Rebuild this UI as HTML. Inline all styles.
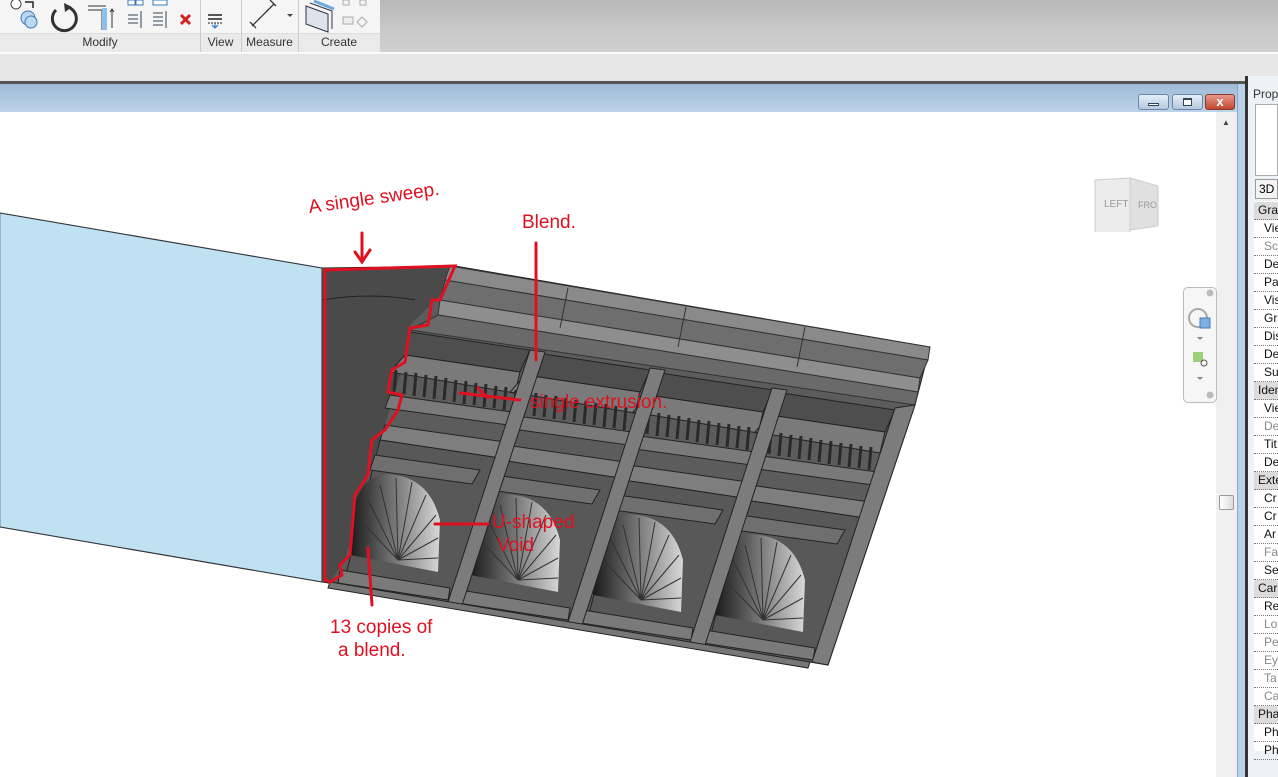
<!DOCTYPE html>
<html><head><meta charset="utf-8"><style>
*{margin:0;padding:0;box-sizing:border-box}
body{width:1278px;height:777px;overflow:hidden;background:#fff;font-family:"Liberation Sans",sans-serif;position:relative}
.abs{position:absolute}
.lbl{position:absolute;top:35px;font-size:12px;color:#333;text-align:center}
.prow{position:absolute;left:1254px;width:24px;height:18px;font-size:12px;line-height:17px;padding-left:10px;border-bottom:1px dotted #777;color:#111;white-space:nowrap;overflow:hidden}
.ph{background:#dcdcdc;padding-left:4px}
.g{color:#888}
.red{position:absolute;color:#e01020;font-size:19px;font-family:"Liberation Sans",sans-serif;white-space:nowrap}
</style></head><body>
<div class="abs" style="left:0;top:0;width:1278px;height:52px;background:linear-gradient(#b8b8b8,#c9c9c9 60%,#d0d0d0)"></div>
<div class="abs" style="left:0;top:0;width:380px;height:52px;background:#f5f5f5;border-bottom:1px solid #ccc"></div>
<div class="abs" style="left:0;top:33px;width:380px;height:19px;background:#eaeaea;border-top:1px solid #ddd"></div>
<div class="abs" style="left:200px;top:0;width:1px;height:52px;background:#ccc"></div>
<div class="abs" style="left:241px;top:0;width:1px;height:52px;background:#ccc"></div>
<div class="abs" style="left:298px;top:0;width:1px;height:52px;background:#ccc"></div>
<div class="lbl" style="left:0;width:200px">Modify</div>
<div class="lbl" style="left:200px;width:41px">View</div>
<div class="lbl" style="left:241px;width:57px">Measure</div>
<div class="lbl" style="left:298px;width:82px">Create</div>
<svg class="abs" style="left:0;top:0" width="380" height="33">
 <circle cx="16" cy="4" r="5" fill="#fff" stroke="#444"/><circle cx="28" cy="18" r="7" fill="#bcd8f0" stroke="#3a7ab8"/><circle cx="31" cy="22" r="6" fill="#bcd8f0" stroke="#3a7ab8"/>
 <path d="M25 2 h8 v6" fill="none" stroke="#222" stroke-width="1.5"/>
 <path d="M70 8 A12 12 0 1 1 56 10" fill="none" stroke="#333" stroke-width="3"/><path d="M64 3 l8 4 -7 5z" fill="#333"/>
 <path d="M88 6 h18 M88 10 h14 v20" stroke="#333" fill="none"/><rect x="102" y="8" width="5" height="22" fill="#8cc0ea"/><path d="M112 28 v-18 M110 12 l2 -3 2 3" stroke="#333" fill="none"/>
 <rect x="128" y="0" width="7" height="5" fill="#fff" stroke="#3a7ab8"/><rect x="136" y="0" width="7" height="5" fill="#fff" stroke="#3a7ab8"/><rect x="153" y="0" width="14" height="5" fill="#fff" stroke="#3a7ab8"/>
 <path d="M128 15 h10 M128 19 h10 M128 23 h10 M141 11 v17" stroke="#345" fill="none"/>
 <path d="M153 13 h10 M153 17 h10 M153 21 h10 M153 25 h10 M166 11 v17" stroke="#345" fill="none"/>
 <path d="M181 15 l9 9 M190 15 l-9 9" stroke="#d62020" stroke-width="3"/>
 <path d="M208 15 h14 M208 19 h14" stroke="#222" stroke-width="1.5"/><path d="M208 23 h14" stroke="#222" stroke-dasharray="2 1"/><path d="M215 23 v5 M212 25 l3 3 3-3" stroke="#1a6ad0" fill="none"/>
 <path d="M252 26 l22 -22 M250 22 l6 6 M270 0 l6 6" stroke="#333" stroke-width="1.3"/><path d="M287 14 l3 3 3 -3z" fill="#444"/>
 <path d="M306 6 l22 8 v18 l-22 -8z" fill="#dde3ea" stroke="#334"/><path d="M310 3 l22 8 v18" fill="none" stroke="#334"/><path d="M314 1 l20 8" stroke="#6aa8e0" stroke-width="3"/>
 <rect x="343" y="0" width="6" height="5" fill="none" stroke="#aaa"/><rect x="360" y="0" width="6" height="5" fill="none" stroke="#aaa"/><rect x="343" y="17" width="10" height="7" fill="#eee" stroke="#aaa"/><path d="M362 17 l5 5 -5 5 -5-5z" fill="none" stroke="#aaa"/>
</svg>
<div class="abs" style="left:0;top:52px;width:1278px;height:30px;background:#e6e6e6;border-top:2px solid #fafafa"></div>
<div class="abs" style="left:0;top:81px;width:1245px;height:3px;background:#555"></div>
<div class="abs" style="left:0;top:84px;width:1240px;height:28px;background:linear-gradient(#9fbbd8,#bcd3ea)"></div>
<div class="abs" style="left:1138px;top:94px;width:31px;height:16px;border:1px solid #6c86a6;border-radius:3px;background:linear-gradient(#e4eef8,#b4c8de)"><div style="margin:8px auto 0;width:11px;height:3px;border:1px solid #345;background:#fff"></div></div>
<div class="abs" style="left:1172px;top:94px;width:31px;height:16px;border:1px solid #6c86a6;border-radius:3px;background:linear-gradient(#e4eef8,#b4c8de)"><div style="margin:3px auto 0;width:9px;height:8px;border:1px solid #345;background:#fff;border-top-width:2px"></div></div>
<div class="abs" style="left:1205px;top:94px;width:30px;height:16px;border:1px solid #8a3a2a;border-radius:3px;background:linear-gradient(#e89a8a,#c04830);color:#fff;font-weight:bold;font-size:13px;text-align:center;line-height:14px">x</div>
<div class="abs" style="left:1216px;top:112px;width:21px;height:665px;background:#f0f0f0"></div>
<div class="abs" style="left:1219px;top:495px;width:15px;height:15px;border:1px solid #999;border-radius:2px;background:linear-gradient(90deg,#fff,#ddd)"></div>
<div class="abs" style="left:1222px;top:118px;font-size:8px;color:#444">▲</div>
<div class="abs" style="left:1237px;top:84px;width:8px;height:693px;background:#b9d2ea;border-left:1px solid #8aa8c8"></div>
<div class="abs" style="left:1245px;top:76px;width:3px;height:701px;background:#333"></div>
<div class="abs" style="left:1248px;top:76px;width:30px;height:701px;background:#eef2f6"></div>
<div class="abs" style="left:1253px;top:87px;font-size:12px;color:#333">Prop</div>
<div class="abs" style="left:1255px;top:104px;width:23px;height:72px;background:#fff;border:1px solid #aaa"></div>
<div class="abs" style="left:1255px;top:179px;width:23px;height:20px;background:#f4f4f4;border:1px solid #999;font-size:12px;line-height:18px;padding-left:3px">3D</div>
<div class="abs" style="left:1254px;top:201px;width:24px;height:550px;background:#fff"></div>
<div class="prow ph" style="top:202px">Gra</div>
<div class="prow" style="top:220px">Vie</div><div class="prow g" style="top:238px">Sc</div><div class="prow" style="top:256px">De</div><div class="prow" style="top:274px">Pa</div><div class="prow" style="top:292px">Vis</div><div class="prow" style="top:310px">Gr</div><div class="prow" style="top:328px">Dis</div><div class="prow" style="top:346px">De</div><div class="prow" style="top:364px">Su</div>
<div class="prow ph" style="top:382px">Iden</div>
<div class="prow" style="top:400px">Vie</div><div class="prow g" style="top:418px">De</div><div class="prow" style="top:436px">Tit</div><div class="prow" style="top:454px">De</div>
<div class="prow ph" style="top:472px">Exte</div>
<div class="prow" style="top:490px">Cr</div><div class="prow" style="top:508px">Cr</div><div class="prow" style="top:526px">Ar</div><div class="prow g" style="top:544px">Fa</div><div class="prow" style="top:562px">Se</div>
<div class="prow ph" style="top:580px">Car</div>
<div class="prow" style="top:598px">Re</div><div class="prow g" style="top:616px">Lo</div><div class="prow g" style="top:634px">Pe</div><div class="prow g" style="top:652px">Ey</div><div class="prow g" style="top:670px">Ta</div><div class="prow g" style="top:688px">Ca</div>
<div class="prow ph" style="top:706px">Pha</div>
<div class="prow" style="top:724px">Ph</div><div class="prow" style="top:742px">Ph</div>
<svg class="abs" style="left:1090px;top:172px" width="75" height="60"><path d="M5 8 l35 -2 v58 l-35 -2z" fill="#ececec" stroke="#ccc"/><path d="M40 6 l28 8 v40 l-28 4z" fill="#e0e0e0" stroke="#ccc"/><text x="14" y="35" font-size="10" fill="#999" font-family="Liberation Sans">LEFT</text><text x="48" y="36" font-size="9" fill="#999" font-family="Liberation Sans">FRO</text></svg>
<div class="abs" style="left:1183px;top:287px;width:34px;height:116px;border:1px solid #bbb;border-radius:5px;background:#f6f6f6"></div>
<svg class="abs" style="left:1183px;top:287px" width="34" height="116"><circle cx="27" cy="6" r="3.5" fill="#bbb"/><circle cx="15" cy="31" r="9" fill="none" stroke="#aaa" stroke-width="2"/><rect x="17" y="31" width="10" height="10" fill="#7eb0e4" stroke="#4a7ab0"/><path d="M14 50 l3 3 3-3z" fill="#888"/><rect x="10" y="65" width="10" height="10" fill="#9ed07a"/><circle cx="21" cy="76" r="3" fill="none" stroke="#555"/><path d="M14 90 l3 3 3-3z" fill="#888"/><circle cx="27" cy="108" r="3.5" fill="#bbb"/></svg>
<svg class="abs" style="left:0;top:112px" width="1216" height="665">
<defs>
 <clipPath id="mass"><polygon points="322,268 455,266 930,347 915,405 828,665 810,662 322,582"/></clipPath>
 <linearGradient id="fan" x1="0" x2="1"><stop offset="0" stop-color="#1a1a1a"/><stop offset=".5" stop-color="#777"/><stop offset="1" stop-color="#d8d8d8"/></linearGradient>
</defs>
<g transform="translate(0,-112)">
 <polygon points="0,213 322,268 322,582 0,527" fill="#c0e1f2" stroke="#6a8a9a"/>
 <line x1="0" y1="213" x2="322" y2="268" stroke="#333"/><line x1="0" y1="527" x2="322" y2="582" stroke="#333"/>
 <polygon points="322,268 455,266 930,347 915,405 828,665 810,662 322,582" fill="#5c5c5c" stroke="#222"/>
 <g clip-path="url(#mass)">
 <polygon points="322,268 450,268 440,296 410,325 400,375 385,425 370,470 345,560 330,582 322,582" fill="#4a4a4a"/>
 <path d="M322 300 Q370 292 415 300" stroke="#222" fill="none"/>
 <g id="bay">
  <polygon points="410,332 530,350 520,372 405,355" fill="#4e4e4e" stroke="#222"/>
  <polygon points="405,355 520,372 515,393 390,372" fill="#7a7a7a" stroke="#222"/>
  <g stroke="#2a2a2a" stroke-width="3">
   <line x1="396" y1="370" x2="394" y2="392"/><line x1="406" y1="372" x2="404" y2="394"/><line x1="416" y1="373" x2="414" y2="396"/><line x1="426" y1="375" x2="424" y2="397"/><line x1="436" y1="376" x2="434" y2="399"/><line x1="446" y1="378" x2="444" y2="400"/><line x1="456" y1="380" x2="454" y2="402"/><line x1="466" y1="381" x2="464" y2="404"/><line x1="476" y1="383" x2="474" y2="405"/><line x1="486" y1="384" x2="484" y2="407"/><line x1="496" y1="386" x2="494" y2="408"/><line x1="506" y1="387" x2="504" y2="410"/>
  </g>
  <polygon points="390,395 512,412 508,425 385,408" fill="#7a7a7a" stroke="#222"/>
  <polygon points="385,425 505,442 500,458 380,440" fill="#7e7e7e" stroke="#222"/>
  <polygon points="380,440 500,458 488,600 345,578" fill="#585858" stroke="#222"/>
  <polygon points="375,455 480,470 472,484 370,470" fill="#6f6f6f" stroke="#222"/>
  <path d="M350 555 L354 505 Q365 470 395 475 Q430 480 440 520 L438 572 Z" fill="url(#fan)"/>
  <g stroke="#333" stroke-width="1"><path d="M398 560 L360 520 M398 560 L368 500 M398 560 L380 485 M398 560 L396 478 M398 560 L412 482 M398 560 L426 495 M398 560 L436 515 M398 560 L438 538 M398 560 L438 558"/></g>
  <polygon points="340,570 450,588 448,600 338,583" fill="#7a7a7a" stroke="#222"/>
 </g>
 <use href="#bay" transform="translate(120,20)"/>
 <use href="#bay" transform="translate(243,40)"/>
 <use href="#bay" transform="translate(365,60)"/>
 </g>
 <polygon points="450,266 930,347 928,360 445,280" fill="#8a8a8a" stroke="#333"/>
 <polygon points="445,280 928,360 920,378 440,300" fill="#6e6e6e" stroke="#333"/>
 <polygon points="440,300 920,378 918,392 438,315" fill="#8e8e8e" stroke="#333"/>
 <polygon points="438,315 918,392 915,405 410,330" fill="#6a6a6a" stroke="#333"/>
 <path d="M568 288 l-8 40 M686 307 l-8 40 M805 327 l-8 40" stroke="#333"/>
 <g fill="#7c7c7c" stroke="#222">
  <polygon points="530,350 545,352 462,605 448,602"/>
  <polygon points="650,368 665,370 582,625 568,622"/>
  <polygon points="772,388 787,390 705,645 690,642"/>
  <polygon points="895,408 915,405 828,665 812,662"/>
 </g>
 <polygon points="330,582 810,662 808,668 328,588" fill="#777" stroke="#222"/>
 <g stroke="#e01020" stroke-width="3" fill="none" stroke-linecap="round">
  <path d="M325 270 L455 266 L440 300 L432 300 L428 325 L410 328 L405 362 L392 370 L388 392 L402 395 L398 410 L385 430 L372 440 L368 475 L355 495 L350 555 L340 565 L342 575 L330 582 L325 580 Z"/>
  <path d="M362 233 L362 262 M355 252 L362 262 L370 250"/>
  <path d="M536 243 L536 360"/>
  <path d="M460 393 L520 400 M478 388 L488 398"/>
  <path d="M435 524 L488 524"/>
  <path d="M368 548 L372 605"/>
 </g>
</g>
</svg>
<div class="red" style="left:308px;top:188px;transform:rotate(-8deg)">A single sweep.</div>
<div class="red" style="left:522px;top:212px">Blend.</div>
<div class="red" style="left:530px;top:392px">single extrusion.</div>
<div class="red" style="left:492px;top:512px">U-shaped</div>
<div class="red" style="left:497px;top:535px">Void</div>
<div class="red" style="left:330px;top:617px">13 copies of</div>
<div class="red" style="left:338px;top:640px">a blend.</div>
</body></html>
